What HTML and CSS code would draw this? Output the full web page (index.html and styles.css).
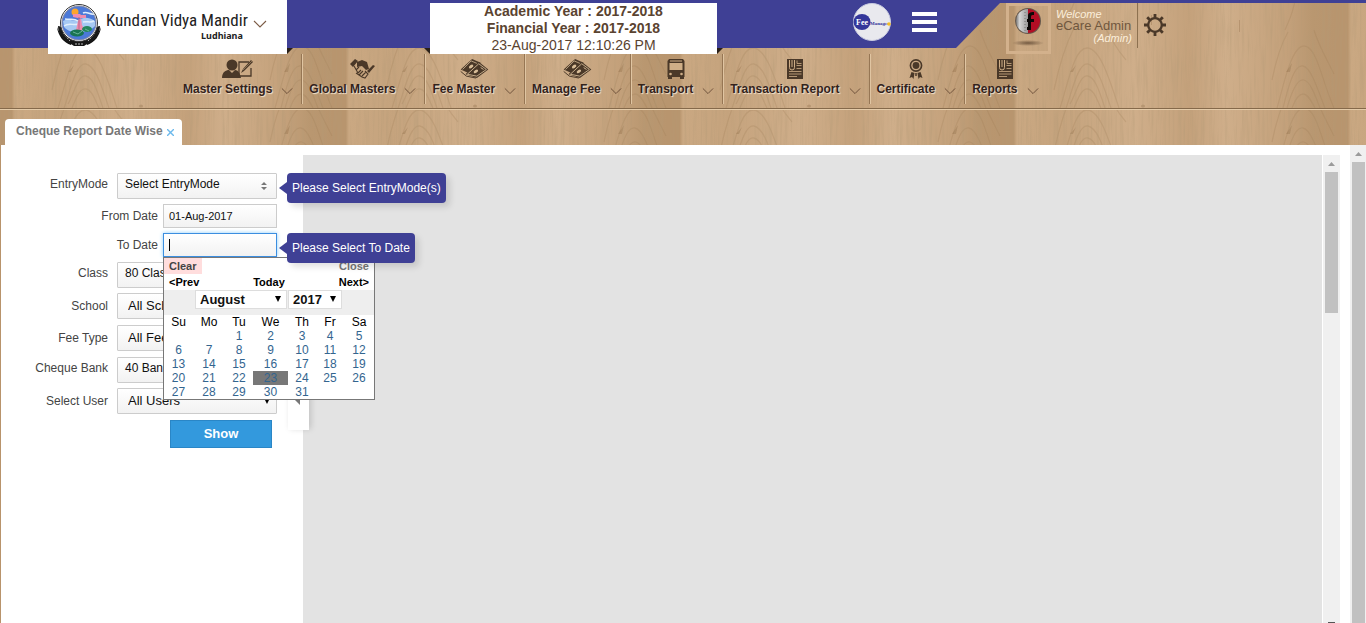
FILE: index.html
```html
<!DOCTYPE html>
<html lang="en">
<head>
<meta charset="utf-8">
<meta name="viewport" content="width=device-width, initial-scale=1">
<title>Cheque Report Date Wise</title>
<link rel="stylesheet" href="styles.css">
</head>
<body>
<svg class="defs" width="0" height="0" aria-hidden="true">
  <defs>
    <symbol id="chev" viewBox="0 0 14 8"><path d="M1 1l6 6 6-6" fill="none" stroke="currentColor" stroke-width="1.1"/></symbol>
    <symbol id="cash" viewBox="0 0 30 21">
      <path d="M1 11L13 0l9 4-10 12z" fill="#4a3828"/>
      <path d="M3 11l9-9 7 3" fill="none" stroke="#d8bd98" stroke-width=".8"/>
      <ellipse cx="12" cy="8" rx="2.600" ry="1.600" transform="rotate(-35 12 8)" fill="#d8bd98"/>
      <path d="M6 16L20 3l10 8-12 9z" fill="#4a3828"/>
      <path d="M8 16L20 5l8 6-10 7z" fill="none" stroke="#d8bd98" stroke-width=".9"/>
      <ellipse cx="17" cy="13" rx="2.600" ry="1.500" transform="rotate(-35 17 13)" fill="#d8bd98"/>
      <path d="M22 9l3 2" stroke="#d8bd98"/>
      <path d="M1 13l6 5 10 2" fill="none" stroke="#4a3828"/>
    </symbol>
    <symbol id="report" viewBox="0 0 16 20">
      <path d="M0 0h16v20H0z" fill="#4a3828"/>
      <path d="M2.500 1v7.500a2.500 2.500 0 0 0 5 0V1M5 1v7" fill="none" stroke="#cfae87" stroke-width="1"/>
      <path d="M10 1.500v3h4.500M9.500 6.500h5M9.500 9.500h5M2 12.500h12.500M2 15h12.500M2 17.500h8" fill="none" stroke="#cfae87" stroke-width=".8"/>
    </symbol>
  </defs>
</svg>

<header class="site-header">
  <svg class="wood" aria-hidden="true">
    <defs>
      <linearGradient id="plank">
        <stop offset="0" stop-color="#b8956e"/><stop offset=".035" stop-color="#b8956e"/>
        <stop offset=".045" stop-color="#caa882"/><stop offset=".18" stop-color="#c5a37d"/>
        <stop offset=".4" stop-color="#cfae8a"/><stop offset=".56" stop-color="#c4a17b"/>
        <stop offset=".67" stop-color="#cfae8a"/><stop offset=".86" stop-color="#c3a07a"/>
        <stop offset=".93" stop-color="#b99770"/><stop offset="1" stop-color="#b8956e"/>
      </linearGradient>
      <filter id="grain" x="0" y="0" width="100%" height="100%">
        <feTurbulence type="fractalNoise" baseFrequency="0.4 0.02" numOctaves="3" seed="8"/>
        <feColorMatrix values="0 0 0 0 .45  0 0 0 0 .32  0 0 0 0 .18  .9 0 0 0 -.39"/>
      </filter>
      <pattern id="boards" width="334" height="108" patternUnits="userSpaceOnUse">
        <rect width="334" height="108" fill="url(#plank)"/>
        <g fill="none" stroke="#9a7850" stroke-width="1.300" opacity=".24">
          <path d="M58 108C66 84 72 48 85 48s22 30 32 60M64 108c6-16 12-46 22-44s16 24 23 44M68 104c6-10 10-30 18-28s12 18 17 32M72 108c4-10 8-20 14-19s9 11 13 19M63 20c4-8 8-12 10-20M100 20c6 14 12 26 24 40M52 90c5-24 10-42 20-62"/>
          <path d="M275 108c6-20 14-62 27-62s18 36 30 62M281 108c5-20 11-44 20-42s16 28 22 42M285 108c4-14 10-30 17-28s12 18 16 28M290 108c3-8 6-14 11-14s9 8 12 14M283 30c4-10 8-16 10-30M312 30c4 14 10 24 20 44M270 80c4-20 8-34 16-48"/>
        </g>
        <g fill="#8c6a45" opacity=".35"><ellipse cx="141" cy="106" rx="2" ry="1.500"/><path d="M68 72l6-7-3 7zM284 72l6-9-2 9z"/><path d="M149 15h1v10h-1zM237 20h1v12h-1z"/></g>
      </pattern>
      <pattern id="boards-low" href="#boards" y="62" width="334" height="108" patternUnits="userSpaceOnUse"/>
    </defs>
    <rect width="100%" height="108" fill="url(#boards)"/>
    <rect y="109" width="100%" height="36" fill="url(#boards-low)"/>
    <rect width="100%" height="145" filter="url(#grain)"/>
  </svg>

  <div class="topbar">
    <div class="blue-bar">
      <div class="school">
        <svg width="46" height="44" viewBox="0 0 46 44" aria-hidden="true">
          <path d="M1 24c3 8 8 13 15 15l-1 3C8 40 2 33 1 24zM45 24c-3 8-8 13-15 15l1 3c7-2 13-9 14-18z" fill="#111"/>
          <path d="M2 23l5 1c1 6 5 11 10 13l12 0c5-2 9-7 10-13l5-1c0 9-6 16-13 18l-3 2H18l-3-2C8 39 2 32 2 23z" fill="#171717"/>
          <path d="M7 30l7 8M39 30l-7 8M19 41h8" stroke="#bbb" stroke-width="1" stroke-dasharray="2 1"/>
          <circle cx="23" cy="20" r="18.500" fill="#fff" stroke="#333"/>
          <circle cx="23" cy="20" r="17" fill="#4b79d8" stroke="#878aa0"/>
          <path d="M7 18c7-3 10 1 15-1s9-4 17 1v5c-5 7-25 9-31 1z" fill="#a6c9f3"/>
          <path d="M9 16c6 1 9-1 13 2M27 10c4-2 7 2 11 1M8 23c5-4 10 0 14-2M27 19c5-1 7 1 11-1" stroke="#e0eefb" stroke-width="1.500" fill="none"/>
          <circle cx="19" cy="9" r="3.500" fill="#fca52c"/>
          <path d="M17 11h7l1 1h5v3h-8l-5-1zM22 18l3-3 1 7 2 4-3 2-5-1z" fill="#ee8cae"/>
          <path d="M23 14v12" stroke="#bd6288"/>
          <ellipse cx="21" cy="30" rx="7" ry="3.500" fill="#197452"/><ellipse cx="31" cy="26" rx="5" ry="3" fill="#25865c"/>
          <path d="M17 29l5 2 4-3M29 26l4 2" stroke="#67b59a" fill="none"/>
        </svg>
        <div class="school-name"><strong>Kundan Vidya Mandir</strong><span>Ludhiana</span></div>
        <svg class="school-chev" width="14" height="8"><use href="#chev"/></svg>
      </div>
      <div class="year-card">
        <b>Academic Year : 2017-2018</b>
        <b>Financial Year : 2017-2018</b>
        <span>23-Aug-2017 12:10:26 PM</span>
      </div>
      <div class="bar-tools">
        <svg width="38" height="38" viewBox="0 0 38 38" role="img" aria-label="Fee Manager">
          <circle cx="19" cy="19" r="18.500" fill="#e9e9ee" stroke="#c9cbe0"/>
          <ellipse cx="9" cy="19" rx="8.500" ry="8" fill="#34369a"/>
          <text class="fee" x="3" y="22" fill="#fff">Fee</text><text class="mgr" x="17" y="22" fill="#34369a">Manager</text>
          <circle cx="36" cy="21" r="1.800" fill="#f6bd20"/>
        </svg>
        <button class="menu" aria-label="Menu"><i></i><i></i><i></i></button>
      </div>
    </div>
    <div class="slant"></div>
    <div class="user">
      <svg class="avatar" width="39" height="45" viewBox="0 0 39 45" aria-hidden="true">
        <defs>
          <linearGradient id="silver"><stop offset="0" stop-color="#777"/><stop offset=".3" stop-color="#d5d5d5"/><stop offset="1" stop-color="#999"/></linearGradient>
          <radialGradient id="shade"><stop offset="0" stop-color="#4f3926" stop-opacity=".7"/><stop offset="1" stop-color="#4f3926" stop-opacity="0"/></radialGradient>
        </defs>
        <circle cx="19" cy="15" r="13" fill="#66584b"/>
        <path d="M19 3a12 12 0 0 0 0 24z" fill="url(#silver)"/><path d="M19 3a12 12 0 0 1 0 24z" fill="#b20d24"/>
        <path d="M18 13h1v-3c0-3 2-4 6-4v3c-2 0-3 0-3 2v2h3v3h-3v8h-4v-3h1v-5h-1z" fill="#0b0808"/>
        <path d="M16 6v20" stroke="#777" stroke-dasharray="1 2"/>
        <ellipse cx="19" cy="37" rx="16" ry="3" fill="url(#shade)"/>
      </svg>
      <div class="user-text"><em>Welcome</em><span>eCare Admin</span><em class="role">(Admin)</em></div>
      <button class="gear" aria-label="Settings">
        <svg width="22" height="22" viewBox="0 0 22 22" fill="none" stroke="#4a3828"><circle cx="11" cy="11" r="6.800" stroke-width="2.300"/><path d="M11 0v4M11 18v4M0 11h4M18 11h4M3.200 3.200L6 6M16 16l2.800 2.800M3.200 18.800L6 16M16 6l2.800-2.800" stroke-width="2.800"/></svg>
      </button>
    </div>
  </div>

  <nav class="nav">
    <a href="#"><svg width="32" height="20" viewBox="0 0 32 20"><circle cx="10" cy="6" r="5.500" fill="#4a3828"/><path d="M0 19c0-6 4-8 7-8l3 3 3-3c3 0 5 3 6 8z" fill="#4a3828"/><path d="M27 3H17v14h12V9" fill="none" stroke="#4a3828" stroke-width="1.300"/><path d="M19 14l2-4 8-9 2 2-9 9z" fill="#4a3828"/><path d="M21 11l9-9" stroke="#b89a72" stroke-width=".6"/></svg><span>Master Settings<svg width="12" height="8"><use href="#chev"/></svg></span></a>
    <a href="#"><svg width="26" height="20" viewBox="0 0 26 20"><path d="M0 5l5-5 3 2-5 6zM25 7l-6 7-2-2 6-6z" fill="#4a3828"/><path d="M7 3l5-2 5 2 2 7-3 1-4-4-5 1z" fill="#4a3828"/><path d="M4 7l4 7M8 14l3-3M9 16l4-4M12 17l4-4M6 11l3-3M15 12l3 3-3 4-3-1-6-4" fill="none" stroke="#4a3828" stroke-width="1.100"/></svg><span>Global Masters<svg width="12" height="8"><use href="#chev"/></svg></span></a>
    <a href="#"><svg width="30" height="20"><use href="#cash"/></svg><span>Fee Master<svg width="12" height="8"><use href="#chev"/></svg></span></a>
    <a href="#"><svg width="30" height="20"><use href="#cash"/></svg><span>Manage Fee<svg width="12" height="8"><use href="#chev"/></svg></span></a>
    <a href="#"><svg width="18" height="20" viewBox="0 0 18 20"><path d="M2 0h14l1.500 2v16H.5V2z" fill="#4a3828"/><path d="M2.500 4h13v7h-13z" fill="#cfae87"/><path d="M3 2h12" stroke="#cfae87"/><circle cx="3.500" cy="15" r="1.300" fill="#cfae87"/><circle cx="14.500" cy="15" r="1.300" fill="#cfae87"/><path d="M1 17h4v3H1zM13 17h4v3h-4z" fill="#4a3828"/></svg><span>Transport<svg width="12" height="8"><use href="#chev"/></svg></span></a>
    <a href="#"><svg width="16" height="20"><use href="#report"/></svg><span>Transaction Report<svg width="12" height="8"><use href="#chev"/></svg></span></a>
    <a href="#"><svg width="14" height="20" viewBox="0 0 14 20"><circle cx="7" cy="6.500" r="5.600" fill="none" stroke="#4a3828" stroke-width="1.600"/><circle cx="7" cy="6.500" r="3.400" fill="#4a3828"/><path d="M2.500 13l3 1-1 6-1.500-2-2.500 1zM11.500 13l-3 1 1 6 1.500-2 2.500 1z" fill="#4a3828"/><path d="M7 14v3" stroke="#4a3828" stroke-width="1.500"/></svg><span>Certificate<svg width="12" height="8"><use href="#chev"/></svg></span></a>
    <a href="#"><svg width="16" height="20"><use href="#report"/></svg><span>Reports<svg width="12" height="8"><use href="#chev"/></svg></span></a>
  </nav>

  <div class="tabs">
    <div class="tab">Cheque Report Date Wise<button aria-label="Close tab"><svg width="7" height="7" viewBox="0 0 7 7"><path d="M0 0l7 7M7 0L0 7" stroke="#6cb9ec" stroke-width="1.400"/></svg></button></div>
  </div>
</header>

<main class="page">
  <form class="filters">
    <div class="row multi"><label for="entry">EntryMode</label>
      <div class="control"><button type="button" id="entry" class="box">Select EntryMode<svg width="6" height="8" viewBox="0 0 6 8"><path d="M0 3l3-3 3 3zM0 5l3 3 3-3z" fill="#777"/></svg></button><div class="tip">Please Select EntryMode(s)</div></div></div>
    <div class="row date"><label for="from">From Date</label><div class="control"><input id="from" class="box" type="text" value="01-Aug-2017"></div></div>
    <div class="row date"><label for="to">To Date</label>
      <div class="control"><input id="to" class="box active" type="text"><i class="caret"></i>
        <div class="tip tip-date">Please Select To Date</div>
        <div class="calendar">
          <div class="cal-line"><button type="button" class="clear">Clear</button><button type="button" class="close">Close</button></div>
          <div class="cal-line nav-line"><button type="button">&lt;Prev</button><button type="button">Today</button><button type="button">Next&gt;</button></div>
          <div class="cal-selects">
            <span class="pick month"><select aria-label="Month"><option>August</option></select><svg width="6" height="6"><path d="M0 0h6L3 6z"/></svg></span>
            <span class="pick year"><select aria-label="Year"><option>2017</option></select><svg width="6" height="6"><path d="M0 0h6L3 6z"/></svg></span>
          </div>
          <table>
            <colgroup><col class="c29"><col class="c32"><col class="c28"><col class="c35"><col class="c28"><col class="c28"><col></colgroup>
            <thead><tr><th>Su</th><th>Mo</th><th>Tu</th><th>We</th><th>Th</th><th>Fr</th><th>Sa</th></tr></thead>
            <tbody>
              <tr><td></td><td></td><td>1</td><td>2</td><td>3</td><td>4</td><td>5</td></tr>
              <tr><td>6</td><td>7</td><td>8</td><td>9</td><td>10</td><td>11</td><td>12</td></tr>
              <tr><td>13</td><td>14</td><td>15</td><td>16</td><td>17</td><td>18</td><td>19</td></tr>
              <tr><td>20</td><td>21</td><td>22</td><td class="today">23</td><td>24</td><td>25</td><td>26</td></tr>
              <tr><td>27</td><td>28</td><td>29</td><td>30</td><td>31</td><td></td><td></td></tr>
            </tbody>
          </table>
        </div>
      </div></div>
    <div class="row multi"><label for="class">Class</label><div class="control"><button type="button" id="class" class="box">80 Classes</button></div></div>
    <div class="row"><label for="school">School</label><div class="control"><select id="school" class="box"><option>All Schools</option></select></div></div>
    <div class="row wide"><label for="fee">Fee Type</label><div class="control"><select id="fee" class="box"><option>All Fee Types</option></select></div></div>
    <div class="row multi wide"><label for="bank">Cheque Bank</label><div class="control"><button type="button" id="bank" class="box">40 Banks</button></div></div>
    <div class="row"><label for="user">Select User</label><div class="control"><select id="user" class="box"><option>All Users</option></select><svg class="arrow" width="6" height="6"><path d="M0 0h6L3 6z"/></svg>
      <div class="note"><svg width="6" height="6"><path d="M0 0h6v6z" fill="#777"/></svg></div></div></div>
    <button type="button" class="show">Show</button>
  </form>
  <section class="report" aria-label="Report"></section>
  <div class="bar inner"><svg width="7" height="4"><path d="M0 4l3.500-4L7 4z" fill="#9b9b9b"/></svg><div class="thumb"></div><i></i></div>
  <div class="bar outer"><svg width="7" height="4"><path d="M0 4l3.500-4L7 4z" fill="#9b9b9b"/></svg><div class="thumb"></div></div>
</main>
</body>
</html>
```
FILE: styles.css
```css
* { box-sizing: border-box; }
body {
  margin: 0;
  min-height: 100vh;
  display: flex;
  flex-direction: column;
  font: 12px/14px "Liberation Sans", Arial, sans-serif;
  background: #fff;
}
button, input, select { font: inherit; color: inherit; margin: 0; }
button { border: 0; padding: 0; background: none; cursor: pointer; }
svg { display: block; flex: none; }
.defs { position: absolute; }

/* Header */
.site-header { position: relative; background: #c7a57f; }
.wood { position: absolute; inset: 0; width: 100%; height: 100%; }
.topbar {
  position: relative;
  z-index: 2;
  display: flex;
  height: 48px;
  border-top: 3px solid #3f4095;
}
.blue-bar {
  flex: none;
  display: flex;
  width: 956px;
  padding-left: 48px;
  background: #3f4095;
}
.slant {
  flex: none;
  width: 44px;
  background: #3f4095;
  clip-path: polygon(0 0, 100% 0, 0 100%);
}
.school, .year-card { position: relative; flex: none; height: 51px; background: #fff; }
.school::after, .year-card::before, .year-card::after {
  content: "";
  position: absolute;
  bottom: 0;
  width: 6px;
  height: 6px;
  background: #2b2119;
}
.school::after, .year-card::after { left: 100%; clip-path: polygon(0 0, 100% 0, 0 100%); }
.year-card::before { right: 100%; clip-path: polygon(0 0, 100% 0, 100% 100%); }
.school {
  display: flex;
  width: 239px;
  padding-left: 8px;
  margin-right: 143px;
  box-shadow: 0 -3px #fff;
}
.school-name { display: flex; flex-direction: column; align-items: flex-start; padding: 6px 0 0 4px; color: #222; }
.school-name strong { font: 17px/22px "Liberation Sans Narrow", "Roboto Condensed", "Open Sans Condensed", sans-serif; white-space: nowrap; }
.school-name span { padding-right: 5px; align-self: flex-end; font: bold 9px/9px "Noto Sans", sans-serif; }
.school-chev { margin: 17px 0 0 5px; color: #7b5b45; }
.year-card {
  width: 287px;
  display: flex;
  flex-direction: column;
  align-items: center;
  font-size: 14px;
  line-height: 17px;
  color: #5a4330;
}
.bar-tools { display: flex; margin-left: 136px; gap: 21px; }
.fee { font: bold 8px "Liberation Serif", serif; }
.mgr { font: bold 5px "Liberation Serif", serif; }
.menu { display: flex; flex-direction: column; gap: 4px; padding-top: 9px; }
.menu i { width: 25px; height: 4px; background: #fff; }
.user { display: flex; padding-left: 6px; }
.avatar { box-sizing: content-box; height: 45px; border: 3px solid #d3b18c; }
.user-text {
  display: flex;
  flex-direction: column;
  width: 87px;
  height: 45px;
  padding: 5px 5px 0;
  border-right: 1px solid #8d7150;
  font-size: 11px;
  line-height: 12px;
  color: #fbeedb;
}
.user-text span { font-size: 13px; line-height: 12px; color: #70573e; white-space: nowrap; }
.user-text .role { align-self: flex-end; }
.gear { align-self: flex-start; margin: 11px 0 0 6px; }

.nav {
  position: relative;
  display: flex;
  height: 60px;
  padding: 6px 0 4px 177px;
}
.nav a {
  display: flex;
  flex-direction: column;
  align-items: center;
  gap: 3px;
  padding: 5px 9px 0 6px;
  border-left: 1px solid #e0c5a2;
  box-shadow: -1px 0 #967654;
  color: #33231c;
  font-weight: bold;
  text-decoration: none;
  text-shadow: 1px 1px 1px #f5e5cf;
  white-space: nowrap;
}
.nav a:first-child { border: 0; box-shadow: none; }
.nav span { display: flex; align-items: center; gap: 9px; }
.nav span svg { color: #6b4f38; margin-top: 3px; }

.tabs {
  position: relative;
  display: flex;
  align-items: flex-end;
  height: 37px;
  padding-left: 5px;
  border-top: 1px solid #85694a;
  box-shadow: inset 0 1px #e4cba9;
}
.tab {
  display: flex;
  align-items: center;
  gap: 4px;
  height: 26px;
  padding: 0 8px 2px 11px;
  border-radius: 4px 4px 0 0;
  background: #fff;
  color: #777;
  font-weight: bold;
}
.tab button { padding-top: 2px; }

/* Page body */
.page { flex: 1; display: flex; border-left: 1px solid #b8936b; }
.filters {
  flex: none;
  display: flex;
  flex-direction: column;
  gap: 5px;
  width: 302px;
  padding: 28px 26px 0 0;
}
.row { display: flex; justify-content: flex-end; gap: 9px; color: #444; }
.row label { padding-top: 6px; }
.row.multi label { padding-top: 4px; }
.row.date { gap: 5px; }
.row.date label { padding-top: 5px; }
.row.wide { margin-top: 1px; }
.control { position: relative; width: 160px; }
.date .control { width: 114px; }
.box {
  display: block;
  appearance: none;
  width: 100%;
  height: 26px;
  border: 1px solid #ccc;
  border-radius: 1px;
  background: linear-gradient(#fff, #f2f2f2);
  color: #111;
  outline: 0;
}
button.box { display: flex; justify-content: space-between; padding: 3px 9px 0 7px; text-align: left; }
button.box svg { margin-top: 5px; }
select.box { padding: 0 10px; font-size: 13px; }
input.box { height: 24px; padding: 0 5px; font-size: 11px; border-radius: 0; }
input.active { border-color: #3b8ee0; box-shadow: 0 0 4px #8ccdfa; }
.caret { position: absolute; left: 6px; top: 6px; width: 1px; height: 12px; background: #000; }
.arrow { position: absolute; right: 7px; top: 10px; }

.tip {
  position: absolute;
  z-index: 5;
  left: calc(100% + 10px);
  top: 0;
  padding: 8px 5px;
  border-radius: 4px;
  background: #3f4095;
  color: #fff;
  box-shadow: 4px 4px 6px rgba(0, 0, 0, .12);
  white-space: nowrap;
}
.tip::before {
  content: "";
  position: absolute;
  right: 100%;
  top: 9px;
  border: 6px solid transparent;
  border-width: 6px 8px 6px 0;
  border-right-color: #3f4095;
}
.note {
  position: absolute;
  left: calc(100% + 11px);
  top: 0;
  width: 21px;
  height: 42px;
  padding: 11px 0 0 6px;
  background: #fff;
  box-shadow: 2px -1px 6px rgba(0, 0, 0, .15);
}

.calendar {
  position: absolute;
  z-index: 3;
  left: 0;
  top: 100%;
  width: 212px;
  border: 1px solid #777;
  background: #fff;
  color: #000;
}
.cal-line { display: flex; justify-content: space-between; height: 16px; font-size: 11px; font-weight: bold; }
.cal-line button { padding: 0 5px; }
.clear { background: #fdd; color: #444; }
.close { color: #777; }
.cal-selects { display: flex; gap: 1px; height: 25px; padding-left: 31px; background: #eee; }
.pick { position: relative; height: 19px; }
.pick select {
  display: block;
  appearance: none;
  width: 100%;
  height: 19px;
  padding: 0 4px;
  border: 1px solid #ddd;
  border-radius: 0;
  background: #fff;
  font-size: 13px;
  font-weight: bold;
  color: #111;
}
.pick svg { position: absolute; right: 6px; top: 6px; }
.month { width: 92px; }
.year { width: 54px; }
.calendar table { width: 100%; table-layout: fixed; border-collapse: collapse; text-align: center; }
.calendar th, .calendar td { height: 14px; padding: 0; font-weight: normal; line-height: 14px; }
.calendar td { color: #33658f; }
.calendar .today { background: #777; }
.c28 { width: 28px; }
.c29 { width: 29px; }
.c32 { width: 32px; }
.c35 { width: 35px; }

.show {
  width: 102px;
  height: 28px;
  margin: 1px 0 0 169px;
  border: 1px solid #2a86c6;
  background: #3399dd;
  color: #fff;
  font-size: 13px;
  font-weight: bold;
}

.report { flex: 1; margin-top: 10px; background: #e3e3e3; }
.bar {
  display: flex;
  flex-direction: column;
  align-items: center;
  width: 17px;
  background: #f0f0f0;
}
.bar .thumb { width: 13px; background: #c1c1c1; }
.inner { margin: 10px 10px 0 1px; }
.inner svg { margin: 7px 0 6px; }
.inner .thumb { height: 141px; }
.inner i { width: 7px; height: 1px; margin-top: auto; background: #555; }
.outer { width: 16px; }
.outer svg { margin: 7px 0 6px; }
.outer .thumb { flex: 1; }
```
